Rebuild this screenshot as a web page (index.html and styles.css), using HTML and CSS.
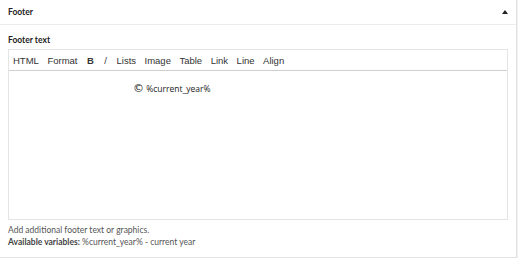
FILE: index.html
```html
<!DOCTYPE html>
<html lang="en">

<head>
    <meta charset="UTF-8">
    <title>Footer</title>
    <link rel="stylesheet" href="styles.css">
</head>

<body>
    <div class="panel">
        <div class="panel-head">
            <span>Footer</span>
            <span class="caret"></span>
        </div>
        <div class="panel-body">
            <label class="field-label">Footer text</label>
            <div class="editor">
                <div class="toolbar">
                    <span>HTML</span>
                    <span>Format</span>
                    <span class="bold">B</span>
                    <span class="ital">/</span>
                    <span>Lists</span>
                    <span>Image</span>
                    <span>Table</span>
                    <span>Link</span>
                    <span>Line</span>
                    <span>Align</span>
                </div>
                <div class="content">
                    <p><span class="copy">&copy;</span> %current_year%</p>
                </div>
            </div>
            <div class="help">
                <p>Add additional footer text or graphics.</p>
                <p><strong>Available variables:</strong> %current_year% - current year</p>
            </div>
        </div>
    </div>
</body>

</html>
```

FILE: styles.css
```css
body {
    margin: 0;
    background: #f1f1f1;
    font-family: Lato, "Open Sans", sans-serif;
    color: #333;
}

.panel {
    width: 517px;
    height: 258px;
    background: #fff;
    border-right: 1px solid #e2e2e2;
    border-bottom: 1px solid #e2e2e2;
    box-sizing: border-box;
}

.panel-head {
    display: flex;
    justify-content: space-between;
    align-items: center;
    height: 24px;
    padding: 0 8px 0 8px;
    border-bottom: 1px solid #ececec;
    font-size: 8.5px;
    font-weight: bold;
    color: #222;
}

.caret {
    width: 0;
    height: 0;
    border-left: 3px solid transparent;
    border-right: 3px solid transparent;
    border-bottom: 4px solid #222;
}

.panel-body {
    padding: 10px 8px 0 8px;
}

.field-label {
    display: block;
    font-size: 8.5px;
    font-weight: bold;
    color: #222;
    margin-bottom: 4px;
}

.editor {
    width: 500px;
    border: 1px solid #e4e4e4;
    box-sizing: border-box;
}

.toolbar {
    display: flex;
    gap: 8.5px;
    height: 19px;
    align-items: center;
    padding: 1px 4px 0 4px;
    border-bottom: 1px solid #cfcfcf;
    font-family: "Liberation Sans", Arial, sans-serif;
    font-size: 9.5px;
    color: #333;
}

.toolbar .bold {
    font-weight: bold;
    margin-left: 1px;
}

.toolbar .ital {
    margin: 0 1px 0 2px;
}

.content {
    height: 148px;
    font-family: "Open Sans", sans-serif;
    font-size: 8.5px;
    color: #222;
}

.content p {
    margin: 0;
    padding: 12px 0 0 124px;
}

.copy {
    font-family: "DejaVu Sans", sans-serif;
    font-size: 11px;
    line-height: 1;
}

.help {
    padding-top: 5px;
    font-size: 8.5px;
    color: #555;
}

.help p {
    margin: 0 0 2px 0;
}

.help strong {
    color: #444;
}
```
